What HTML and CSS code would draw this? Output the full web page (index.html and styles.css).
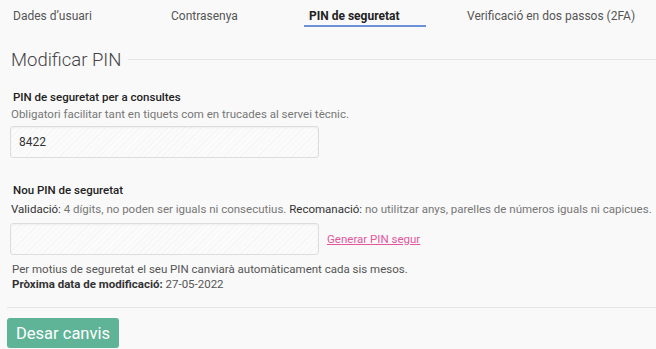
FILE: index.html
```html
<!DOCTYPE html>
<html lang="ca">
<head>
    <meta charset="UTF-8">
    <meta name="viewport" content="width=device-width, initial-scale=1.0">
    <title>PIN de seguretat</title>
    <link rel="stylesheet" href="styles.css">
</head>
<body>
    <nav class="tabs">
        <a class="tab tab-1">Dades d’usuari</a>
        <a class="tab tab-2">Contrasenya</a>
        <a class="tab tab-3 active">PIN de seguretat</a>
        <a class="tab tab-4">Verificació en dos passos (2FA)</a>
    </nav>

    <div class="legend">
        <h2>Modificar PIN</h2>
    </div>

    <div class="form-group">
        <label for="pin">PIN de seguretat per a consultes</label>
        <p class="help">Obligatori facilitar tant en tiquets com en trucades al servei tècnic.</p>
        <input type="text" id="pin" class="field" value="8422">
    </div>

    <div class="form-group second">
        <label for="newPin">Nou PIN de seguretat</label>
        <p class="help"><span class="strong">Validació:</span> 4 dígits, no poden ser iguals ni consecutius. <span class="strong">Recomanació:</span> no utilitzar anys, parelles de números iguals ni capicues.</p>
        <div class="row">
            <input type="text" id="newPin" class="field">
            <a href="#" class="link">Generar PIN segur</a>
        </div>
    </div>

    <div class="note">
        <p>Per motius de seguretat el seu PIN canviarà automàticament cada sis mesos.</p>
        <p><b>Pròxima data de modificació:</b> 27-05-2022</p>
    </div>

    <div class="actions">
        <button class="btn">Desar canvis</button>
    </div>
</body>
</html>
```

FILE: styles.css
```css
* {
    margin: 0;
    padding: 0;
    box-sizing: border-box;
}

body {
    font-family: 'Roboto', 'Liberation Sans', sans-serif;
    background-color: #f9f9f9;
    color: #333333;
    font-size: 11.5px;
    line-height: 15px;
    width: 656px;
    height: 349px;
    overflow: hidden;
}

/* pestanyes */
.tabs {
    display: flex;
    padding-top: 7px;
}

.tab {
    display: block;
    font-size: 12px;
    line-height: 18px;
    color: #555555;
    border-bottom: 2px solid transparent;
}

.tab-1 { margin-left: 13px; width: 158px; }
.tab-2 { width: 133px; }
.tab-3 {
    width: 122px;
    padding-left: 5px;
    margin-right: 41px;
    color: #222222;
    font-weight: bold;
    border-bottom-color: #6b92d8;
}

/* títol */
.legend {
    display: flex;
    align-items: center;
    margin-top: 21px;
    padding-left: 11px;
}

.legend h2 {
    font-size: 18.5px;
    line-height: 24px;
    font-weight: 300;
    color: #444444;
    margin-right: 7px;
}

.legend::after {
    content: '';
    flex: 1;
    border-top: 1px solid #e5e5e5;
    margin-top: -2px;
}

/* formulari */
.form-group {
    padding-left: 11px;
    margin-top: 18px;
}

.form-group.second {
    margin-top: 25px;
}

.form-group label {
    display: block;
    font-weight: 500;
    color: #222222;
    padding-left: 2px;
    margin-bottom: 2px;
}

.second label {
    margin-bottom: 4px;
}

.help {
    color: #777777;
    margin-bottom: 4px;
}

.second .help {
    margin-bottom: 6px;
}

.help .strong {
    color: #333333;
}

.field {
    width: 309px;
    height: 32px;
    margin-left: -1px;
    padding: 0 8px;
    font-family: inherit;
    font-size: 12px;
    color: #333333;
    border: 1px solid #dddddd;
    border-radius: 3px;
    background: repeating-linear-gradient(135deg, #fbfbfb 0 3px, #f6f6f6 3px 4px);
    box-shadow: inset 0 1px 2px rgba(0, 0, 0, 0.05);
    outline: none;
}

.row {
    display: flex;
    align-items: center;
    gap: 8px;
}

.link {
    color: #e2579d;
    font-size: 11.5px;
}

.note {
    padding-left: 12px;
    margin-top: 7px;
    color: #555555;
}

.note b {
    color: #333333;
}

.actions {
    margin: 15px 0 0 7px;
    padding-top: 10px;
    border-top: 1px solid #e5e5e5;
}

.btn {
    display: block;
    width: 112px;
    height: 30px;
    background-color: #5fb396;
    color: #ffffff;
    border: none;
    border-radius: 3px;
    font-family: inherit;
    font-size: 16.5px;
    cursor: pointer;
}
```
